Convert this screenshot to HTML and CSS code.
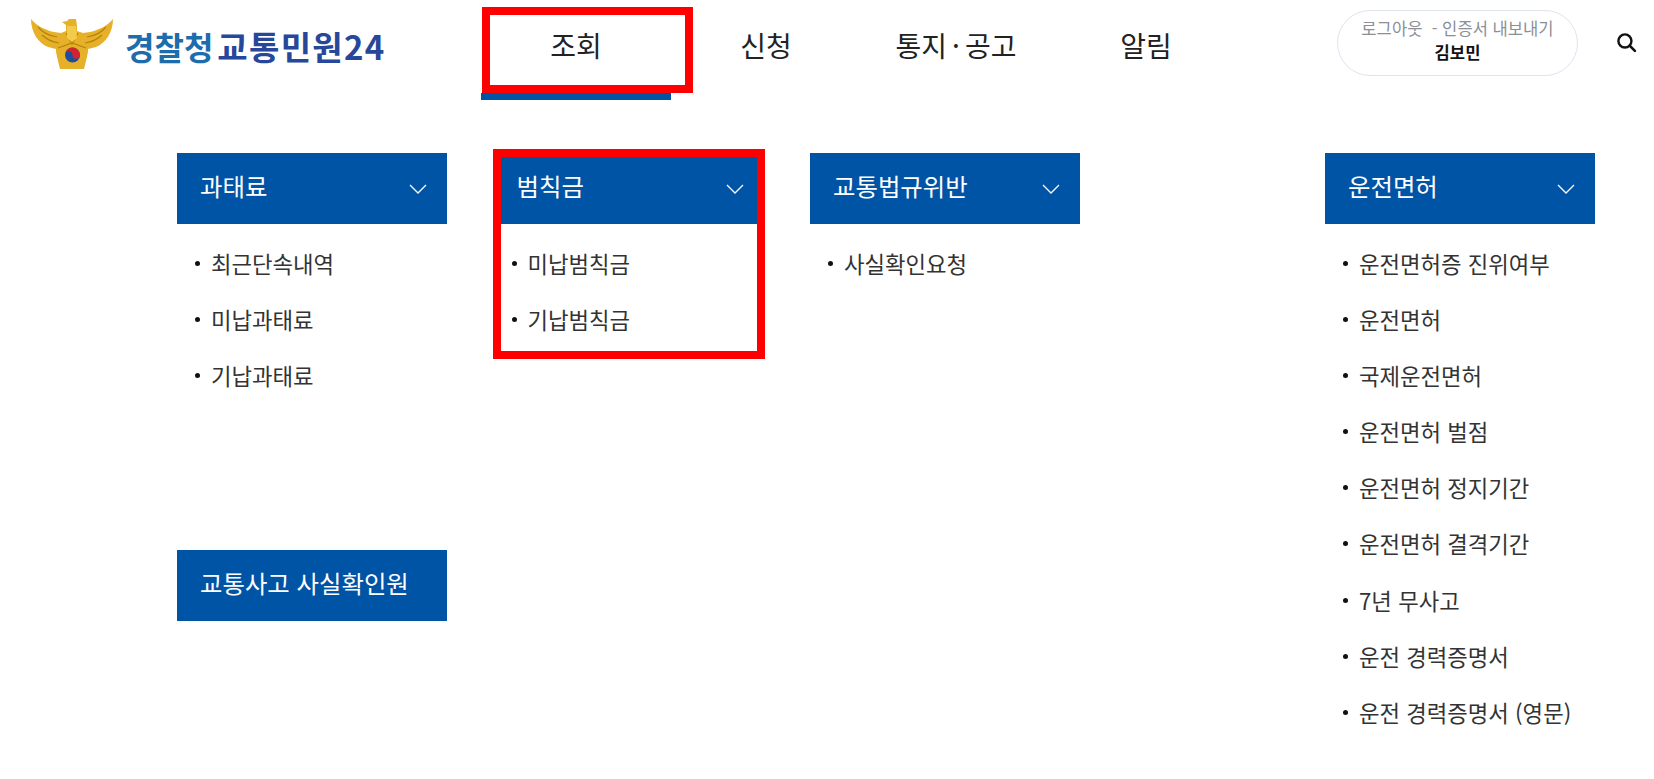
FILE: index.html
```html
<!DOCTYPE html>
<html lang="ko">
<head>
    <meta charset="UTF-8">
    <meta name="viewport" content="width=device-width, initial-scale=1.0">
    <title>경찰청 교통민원24</title>
    <link rel="stylesheet" href="styles.css">
</head>
<body>
    <header class="header">
        <a class="logo" href="#">
            <svg class="emblem" viewBox="0 0 84 52" aria-hidden="true">
                <path d="M1 1 C7 8 15 12 24 14 L31 15 L36 13 L36 7 L32 4 L37 3 L39 1 L46 1 L47 8 L47 13 L53 15 L60 14 C69 12 77 8 83 1 C83 14 76 25 66 29 L58 31 L58 34 L56 43 L54 51 L30 51 L28 43 L26 34 L26 31 L18 29 C8 25 1 14 1 1 Z" fill="#e6b128"/>
                <path d="M8 9 C13 15 20 18 27 19 M76 9 C71 15 64 18 57 19 M12 17 C17 22 23 24 29 25 M72 17 C67 22 61 24 55 25 M36 15 L42 26 L48 15 M28 30 L42 25 L56 30" fill="none" stroke="#b5820f" stroke-width="1.2"/>
                <path d="M37 8 L46 8 L47 20 L42 24 L37 20 Z" fill="#f3cb4b"/>
                <circle cx="42.5" cy="37" r="7.5" fill="#1f4e9c"/>
                <path d="M35 37 A7.5 7.5 0 0 1 50 37 A3.75 3.75 0 0 1 42.5 37 A3.75 3.75 0 0 0 35 37 Z" fill="#d2232f"/>
            </svg>
            <span class="logo-text"><span class="logo-police">경찰청</span><span class="logo-service">교통민원24</span></span>
        </a>
        <nav class="nav">
            <a class="nav-item active" href="#">조회<span class="mark mark-nav"></span></a>
            <a class="nav-item" href="#">신청</a>
            <a class="nav-item" href="#">통지<span class="nav-dot">·</span>공고</a>
            <a class="nav-item" href="#">알림</a>
        </nav>
        <div class="user-box">
            <div class="user-links">로그아웃 &nbsp;- 인증서 내보내기</div>
            <div class="user-name">김보민</div>
        </div>
        <svg class="search" viewBox="0 0 20 20" aria-hidden="true">
            <circle cx="8.5" cy="8.5" r="6.2" fill="none" stroke="#111" stroke-width="2.3"/>
            <path d="M13 13 L18 18" stroke="#111" stroke-width="2.5" stroke-linecap="round"/>
        </svg>
    </header>

    <main class="menu">
        <section class="col">
            <div class="col-title">과태료<svg class="chevron" viewBox="0 0 18 10"><path d="M1 1 L9 9 L17 1"/></svg></div>
            <ul class="col-list">
                <li>최근단속내역</li>
                <li>미납과태료</li>
                <li>기납과태료</li>
            </ul>
            <div class="col-title col-title-single">교통사고 사실확인원</div>
        </section>
        <section class="col">
            <div class="col-title">범칙금<svg class="chevron" viewBox="0 0 18 10"><path d="M1 1 L9 9 L17 1"/></svg></div>
            <ul class="col-list">
                <li>미납범칙금</li>
                <li>기납범칙금</li>
            </ul>
            <span class="mark mark-col"></span>
        </section>
        <section class="col">
            <div class="col-title">교통법규위반<svg class="chevron" viewBox="0 0 18 10"><path d="M1 1 L9 9 L17 1"/></svg></div>
            <ul class="col-list">
                <li>사실확인요청</li>
            </ul>
        </section>
        <section class="col col-last">
            <div class="col-title">운전면허<svg class="chevron" viewBox="0 0 18 10"><path d="M1 1 L9 9 L17 1"/></svg></div>
            <ul class="col-list">
                <li>운전면허증 진위여부</li>
                <li>운전면허</li>
                <li>국제운전면허</li>
                <li>운전면허 벌점</li>
                <li>운전면허 정지기간</li>
                <li>운전면허 결격기간</li>
                <li>7년 무사고</li>
                <li>운전 경력증명서</li>
                <li>운전 경력증명서 (영문)</li>
            </ul>
        </section>
    </main>
</body>
</html>
```

FILE: styles.css
```css
body {
    margin: 0;
    background: #fff;
    color: #222;
    font-family: "Noto Sans CJK KR", "Noto Sans", sans-serif;
}

a {
    color: inherit;
    text-decoration: none;
}

/* header */
.header {
    display: flex;
    align-items: flex-start;
    height: 100px;
    padding-left: 30px;
}
.logo {
    display: flex;
    flex: none;
    align-items: center;
    width: 451px;
    height: 70px;
    margin-top: 18px;
}
.emblem {
    width: 84px;
    height: 52px;
    margin-top: -18px;
    flex: none;
}
.logo-text {
    margin-left: 11px;
    margin-top: -14px;
    font-size: 32px;
    font-weight: 700;
    white-space: nowrap;
}
.logo-police {
    color: #1d6cab;
    margin-right: 4px;
}
.logo-service {
    color: #27479b;
    font-size: 33px;
    letter-spacing: 1.3px;
}

.nav {
    display: flex;
    flex: none;
}
.nav-item {
    position: relative;
    width: 190px;
    height: 93px;
    line-height: 90px;
    font-size: 28px;
    text-align: center;
    color: #222;
}
.nav-item.active {
    border-bottom: 7px solid #0054a6;
}
.nav-dot {
    margin: 0 5px;
}

.mark {
    position: absolute;
    border: 8px solid #f00;
    box-sizing: border-box;
}
.mark-nav {
    left: 1px;
    top: 7px;
    width: 211px;
    height: 86px;
}

.user-box {
    flex: none;
    width: 241px;
    height: 66px;
    margin: 10px 0 0 96px;
    box-sizing: border-box;
    border: 1px solid #dfe3ee;
    border-radius: 33px;
    text-align: center;
    padding-top: 5px;
    font-size: 16.6px;
    line-height: 24px;
}
.user-links {
    color: #8b8f97;
    white-space: nowrap;
}
.user-name {
    color: #111;
    font-weight: 700;
}
.search {
    flex: none;
    width: 21px;
    height: 21px;
    margin: 32px 0 0 38px;
}

/* menu columns */
.menu {
    display: flex;
    gap: 46.5px;
    width: 1418px;
    margin: 53px 0 0 177px;
}
.col {
    position: relative;
    width: 270px;
}
.col-last {
    margin-left: auto;
}
.col-title {
    display: flex;
    align-items: center;
    justify-content: space-between;
    height: 71px;
    padding: 0 20px 6px 23px;
    box-sizing: border-box;
    background: #0054a6;
    color: #fff;
    font-size: 24.4px;
}
.col-title-single {
    margin-top: 147px;
}
.chevron {
    width: 18px;
    height: 10px;
    margin-top: 6px;
    fill: none;
    stroke: #fff;
    stroke-width: 1.3;
}
.col-list {
    list-style: none;
    margin: 0;
    padding: 11px 0 0 34px;
}
.col-list li {
    position: relative;
    height: 56.1px;
    line-height: 56px;
    font-size: 22.3px;
    color: #333;
    white-space: nowrap;
}
.col-list li::before {
    content: "";
    position: absolute;
    left: -16px;
    top: 26px;
    width: 5px;
    height: 5px;
    border-radius: 50%;
    background: #111;
}
.mark-col {
    left: -1px;
    top: -4px;
    width: 272px;
    height: 210px;
}
```
